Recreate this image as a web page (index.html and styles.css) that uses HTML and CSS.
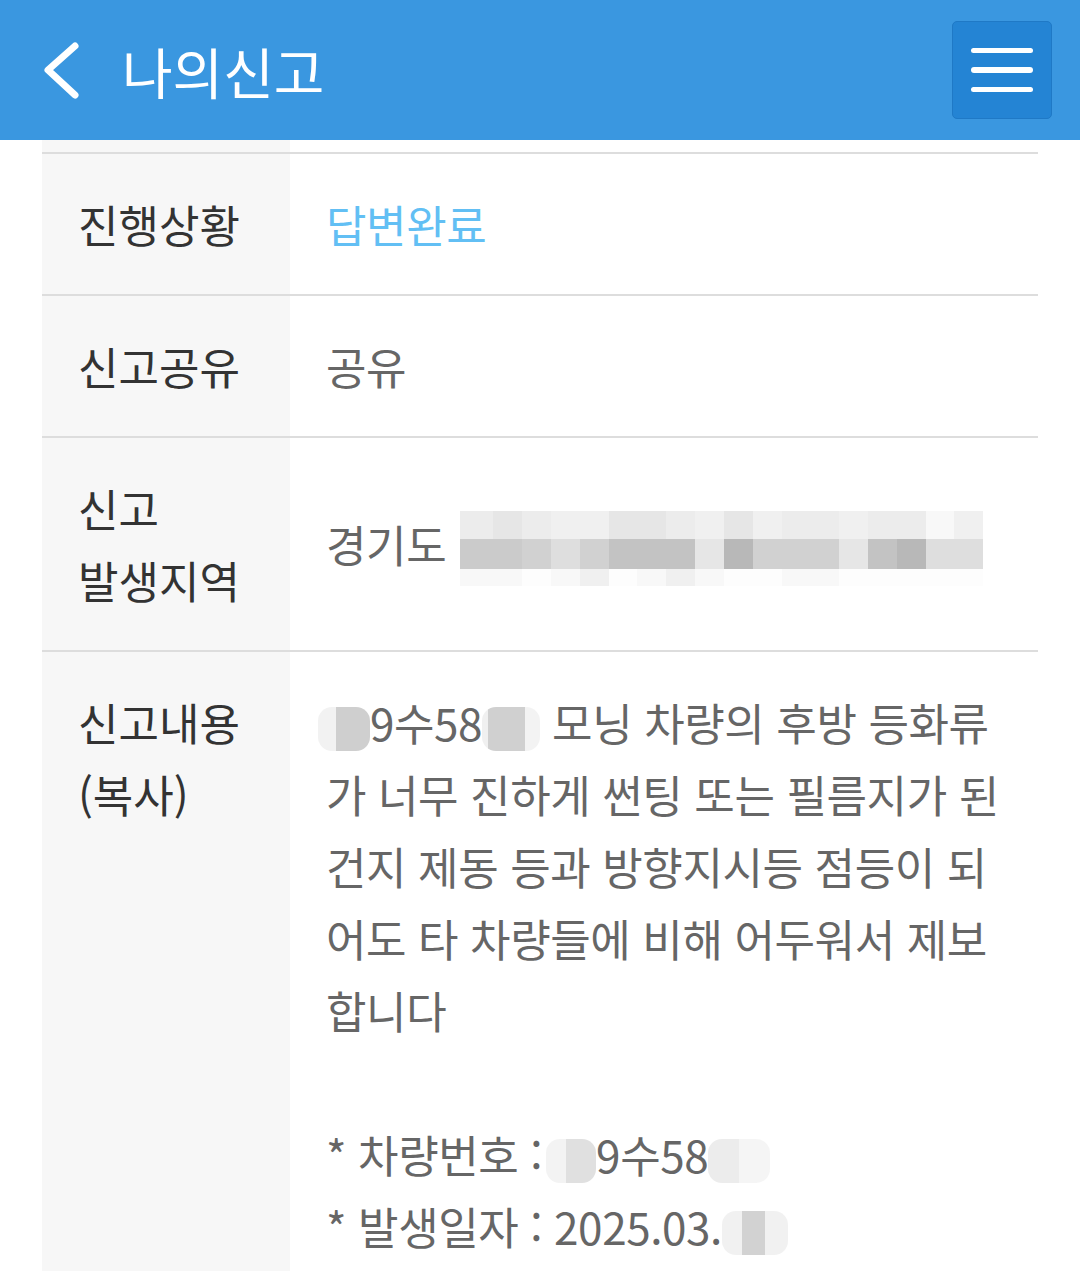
FILE: index.html
```html
<!DOCTYPE html>
<html lang="ko">
<head>
<meta charset="utf-8">
<title>나의신고</title>
<link rel="stylesheet" href="styles.css">
</head>
<body>
<header class="topbar">
  <button class="back" aria-label="뒤로">
    <svg width="40" height="60" viewBox="0 0 40 60"><polyline points="33,6 6,30 33,55" fill="none" stroke="#fff" stroke-width="7" stroke-linecap="round" stroke-linejoin="round"/></svg>
  </button>
  <h1 class="title">나의신고</h1>
  <button class="menu" aria-label="메뉴"><span></span><span></span><span></span></button>
</header>

<div class="table">
  <div class="row row-cut"><div class="th"></div><div class="td"></div></div>
  <div class="row"><div class="th">진행상황</div><div class="td status">답변완료</div></div>
  <div class="row"><div class="th">신고공유</div><div class="td">공유</div></div>
  <div class="row"><div class="th">신고<br>발생지역</div><div class="td mid"><span>경기도</span><span class="pix"><span class="pr top"><i class="a"></i><i class="b"></i><i class="a"></i><i class="c"></i><i class="c"></i><i class="b"></i><i class="b"></i><i class="a"></i><i class="c"></i><i class="b"></i><i class="c"></i><i class="a"></i><i class="a"></i><i class="c"></i><i class="a"></i><i class="a"></i><i class="e"></i><i class="c"></i></span><span class="pr midrow"><i class="k3"></i><i class="k3"></i><i class="k2"></i><i class="k1"></i><i class="k2"></i><i class="k4"></i><i class="k4"></i><i class="k4"></i><i class="k0"></i><i class="k5"></i><i class="k2"></i><i class="k2"></i><i class="k2"></i><i class="k0"></i><i class="k4"></i><i class="k5"></i><i class="k1"></i><i class="k1"></i></span><span class="pr bot"><i class="e"></i><i class="e"></i><i class="f"></i><i class="e"></i><i class="c"></i><i class="f"></i><i class="e"></i><i class="c"></i><i class="e"></i><i class="f"></i><i class="f"></i><i class="e"></i><i class="e"></i><i class="f"></i><i class="f"></i><i class="f"></i><i class="f"></i><i class="f"></i></span></span></div></div>
  <div class="row last"><div class="th">신고내용<br>(복사)</div><div class="td content"><span class="blur b1"></span>9수58<span class="blur b2"></span> 모닝 차량의 후방 등화류<br>가 너무 진하게 썬팅 또는 필름지가 된<br>건지 제동 등과 방향지시등 점등이 되<br>어도 타 차량들에 비해 어두워서 제보<br>합니다<br><br>* 차량번호 : <span class="blur b3"></span>9수58<span class="blur b4"></span><br>* 발생일자 : 2025.03.<span class="blur b5"></span></div></div>
</div>
</body>
</html>
```

FILE: styles.css
```css
html, body {
  margin: 0;
  padding: 0;
  background: #fff;
}
body {
  width: 1080px;
  height: 1271px;
  overflow: hidden;
  font-family: "Noto Sans CJK KR", "Noto Sans", sans-serif;
}
.topbar {
  height: 140px;
  background: #3a97e0;
  display: flex;
  align-items: center;
  padding: 0 28px 0 42px;
  box-sizing: border-box;
}
.back {
  background: none;
  border: 0;
  padding: 0;
  width: 40px;
  height: 60px;
  display: flex;
}
.title {
  margin: 0 0 0 40px;
  color: #fff;
  font-size: 55px;
  font-weight: 400;
  letter-spacing: 0;
  line-height: 1;
}
.menu {
  margin-left: auto;
  width: 100px;
  height: 98px;
  background: #2484d4;
  border: 1px solid #1f79c6;
  border-radius: 5px;
  padding: 0;
  display: flex;
  flex-direction: column;
  align-items: center;
  justify-content: center;
  gap: 14px;
}
.menu span {
  display: block;
  width: 62px;
  height: 5.5px;
  border-radius: 3px;
  background: #fff;
}
.table {
  margin-left: 42px;
  width: 996px;
}
.row {
  display: flex;
  border-bottom: 2px solid #dddddd;
}
.row.last { border-bottom: 0; }
.row-cut { height: 12px; }
.row-cut .th, .row-cut .td { padding: 0; }
.th {
  width: 248px;
  flex: none;
  background: #f7f7f7;
  box-sizing: border-box;
  padding: 34px 0 34px 36px;
  color: #333;
  font-size: 44px;
  line-height: 72px;
  letter-spacing: 0;
}
.td {
  flex: 1;
  padding: 34px 36px;
  color: #666;
  font-size: 44px;
  line-height: 72px;
  letter-spacing: -0.4px;
  white-space: nowrap;
}
.status { color: #62bff4; }
.mid {
  display: flex;
  align-items: center;
}
.mid .pix { margin-left: 14px; margin-top: 8px; }
.pix {
  display: inline-flex;
  flex-direction: column;
  width: 523px;
}
.pr { display: flex; }
.pr i { flex: 1; display: block; }
.pr i:first-child { flex: 1.15; }
.top { height: 28px; }
.midrow { height: 30px; }
.bot { height: 17px; }
.a { background: #ececec; }
.b { background: #e6e6e6; }
.c { background: #f0f0f0; }
.e { background: #f8f8f8; }
.f { background: #fdfdfd; }
.k0 { background: #e6e6e6; }
.k1 { background: #dedede; }
.k2 { background: #d1d1d1; }
.k3 { background: #cbcbcb; }
.k4 { background: #c3c3c3; }
.k5 { background: #b8b8b8; }
.content { white-space: nowrap; }
.blur {
  display: inline-block;
  vertical-align: middle;
  height: 44px;
  border-radius: 14px;
}
.b1 {
  width: 52px;
  margin-left: -8px;
  background: linear-gradient(90deg, #f2f2f2 0 35%, #cfcfcf 35% 100%);
}
.b2 {
  width: 58px;
  background: linear-gradient(90deg, #f0f0f0 0 10%, #d0d0d0 10% 75%, #f3f3f3 75% 100%);
}
.b3 {
  width: 50px;
  margin-left: -8px;
  background: linear-gradient(90deg, #f3f3f3 0 40%, #e0e0e0 40% 100%);
}
.b4 {
  width: 62px;
  background: linear-gradient(90deg, #ececec 0 50%, #f5f5f5 50% 100%);
}
.b5 {
  width: 66px;
  background: linear-gradient(90deg, #f1f1f1 0 30%, #d2d2d2 30% 65%, #f1f1f1 65% 100%);
}
```
